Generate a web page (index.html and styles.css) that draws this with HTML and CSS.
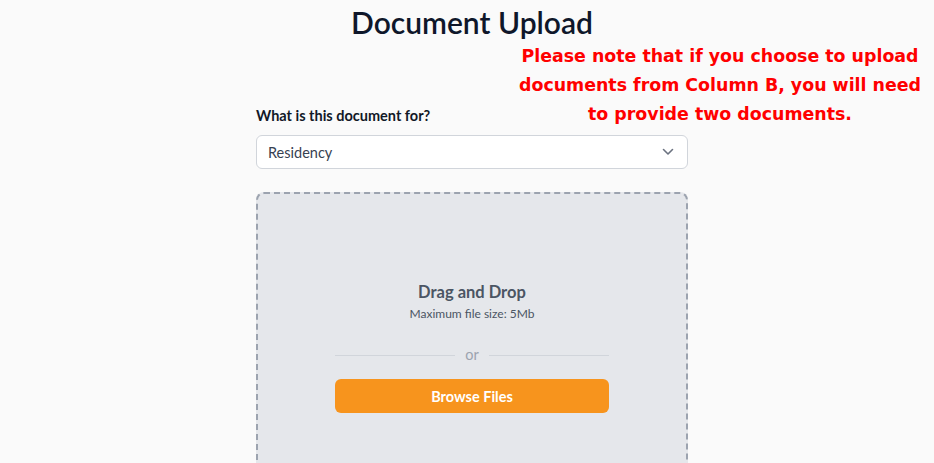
FILE: index.html
```html
<!DOCTYPE html>
<html lang="en">
<head>
  <meta charset="UTF-8" />
  <meta name="viewport" content="width=device-width, initial-scale=1.0"/>
  <title>Document Upload</title>
  <link rel="stylesheet" href="styles.css">
</head>
<body>
  <h1 class="title">Document Upload</h1>

  <p class="note">Please note that if you choose to upload documents from Column B, you will need to provide two documents.</p>

  <div class="form">
    <label class="label" for="purpose">What is this document for?</label>
    <div class="select">
      <span>Residency</span>
      <svg width="12" height="8" viewBox="0 0 12 8"><path d="M1.5 1.5 L6 6 L10.5 1.5" fill="none" stroke="#6b7280" stroke-width="1.6" stroke-linecap="round" stroke-linejoin="round"/></svg>
    </div>

    <div class="dropzone">
      <div class="drop-title">Drag and Drop</div>
      <div class="drop-sub">Maximum file size: 5Mb</div>
      <div class="divider"><span>or</span></div>
      <button class="browse">Browse Files</button>
    </div>
  </div>
</body>
</html>
```

FILE: styles.css
```css
body {
  margin: 0;
  padding-left: 10px;
  background: #fafafa;
  font-family: Lato, "Noto Sans", sans-serif;
  color: #111827;
  position: relative;
}
.title {
  margin: 4px 0 0;
  text-align: center;
  font-size: 30px;
  line-height: 36px;
  font-weight: 600;
  color: #0f172a;
}
.note {
  position: absolute;
  top: 42px;
  left: 506px;
  width: 428px;
  margin: 0;
  text-align: center;
  font-family: "DejaVu Sans", sans-serif;
  font-weight: bold;
  font-size: 17.4px;
  line-height: 29px;
  color: #f00;
}
.form {
  width: 432px;
  margin: 66px auto 0;
}
.label {
  display: block;
  font-size: 14.5px;
  font-weight: 700;
  line-height: 20px;
  color: #111827;
}
.select {
  margin-top: 9px;
  height: 34px;
  box-sizing: border-box;
  background: white;
  border: 1px solid #d1d5db;
  border-radius: 6px;
  display: flex;
  align-items: center;
  justify-content: space-between;
  padding: 0 13px 0 11px;
  font-size: 14.5px;
  color: #374151;
}
.dropzone {
  margin-top: 23px;
  border: 2px dashed #9ca3af;
  border-radius: 8px;
  background: #e5e7eb;
  padding: 86px 0;
  display: flex;
  flex-direction: column;
  align-items: center;
}
.drop-title {
  font-size: 16.5px;
  line-height: 24px;
  font-weight: 700;
  color: #4b5563;
}
.drop-sub {
  font-size: 12px;
  line-height: 20px;
  color: #4b5563;
}
.divider {
  width: 274px;
  margin-top: 21px;
  display: flex;
  align-items: center;
  gap: 10px;
  font-size: 14.5px;
  line-height: 20px;
  color: #9ca3af;
}
.divider::before,
.divider::after {
  content: "";
  flex: 1;
  height: 1px;
  background: #d1d5db;
}
.browse {
  margin-top: 14px;
  width: 274px;
  height: 34px;
  border: none;
  border-radius: 6px;
  background: #f7941d;
  color: white;
  font-family: inherit;
  font-size: 14.5px;
  font-weight: 700;
  cursor: pointer;
}
```
